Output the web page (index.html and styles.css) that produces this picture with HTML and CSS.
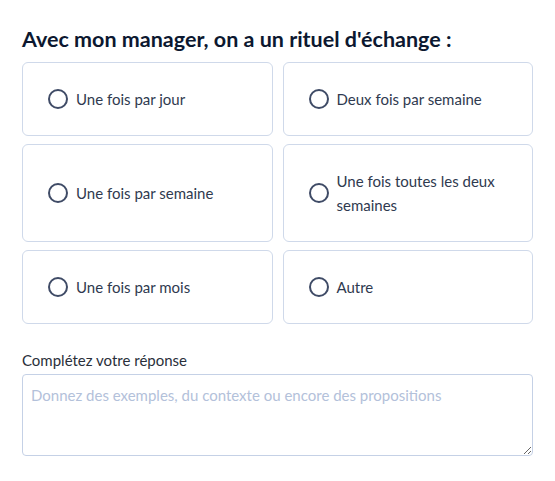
FILE: index.html
```html
<!DOCTYPE html>
<html lang="fr">
<head>
  <meta charset="UTF-8" />
  <meta name="viewport" content="width=device-width, initial-scale=1.0"/>
  <title>Rituel d'échange</title>
  <link rel="stylesheet" href="styles.css">
</head>
<body>

  <!-- question -->
  <div class="question">
    <h2>Avec mon manager, on a un rituel d'échange :</h2>

    <div class="choices">
      <label class="choice"><input type="radio" name="rituel"><span>Une fois par jour</span></label>
      <label class="choice"><input type="radio" name="rituel"><span>Deux fois par semaine</span></label>
      <label class="choice"><input type="radio" name="rituel"><span>Une fois par semaine</span></label>
      <label class="choice"><input type="radio" name="rituel"><span>Une fois toutes les deux semaines</span></label>
      <label class="choice"><input type="radio" name="rituel"><span>Une fois par mois</span></label>
      <label class="choice"><input type="radio" name="rituel"><span>Autre</span></label>
    </div>

    <div class="comment">
      <label for="reponse">Complétez votre réponse</label>
      <textarea id="reponse" placeholder="Donnez des exemples, du contexte ou encore des propositions"></textarea>
    </div>
  </div>

</body>
</html>
```

FILE: styles.css
```css
body {
  margin: 0;
  padding: 0;
  font-family: Lato, 'Open Sans', sans-serif;
  background: #fff;
  color: #2f3a4f;
}

.question {
  padding: 26px 22px 0 22px;
}

h2 {
  margin: 0 0 10px 0;
  font-size: 21.5px;
  font-weight: 700;
  color: #0c1830;
}

.choices {
  display: grid;
  grid-template-columns: 1fr 1fr;
  gap: 8px 10px;
}

.choice {
  display: flex;
  align-items: center;
  gap: 8px;
  padding: 24px 16px 24px 25px;
  border: 1px solid #cfd9ea;
  border-radius: 6px;
  font-size: 15px;
  line-height: 24px;
  cursor: pointer;
}

.choice input {
  appearance: none;
  flex: none;
  width: 20px;
  height: 20px;
  margin: 0;
  border: 2px solid #3f4b66;
  border-radius: 50%;
}

.comment {
  margin-top: 27px;
}

.comment label {
  display: block;
  font-size: 15px;
  color: #2a2f3a;
  margin-bottom: 5px;
}

.comment textarea {
  display: block;
  box-sizing: border-box;
  width: 100%;
  height: 82px;
  padding: 11px 8px;
  border: 1px solid #c5d1e6;
  border-radius: 4px;
  font-family: inherit;
  font-size: 15px;
  color: #2f3a4f;
}

.comment textarea::placeholder {
  color: #b3c1da;
}
```
